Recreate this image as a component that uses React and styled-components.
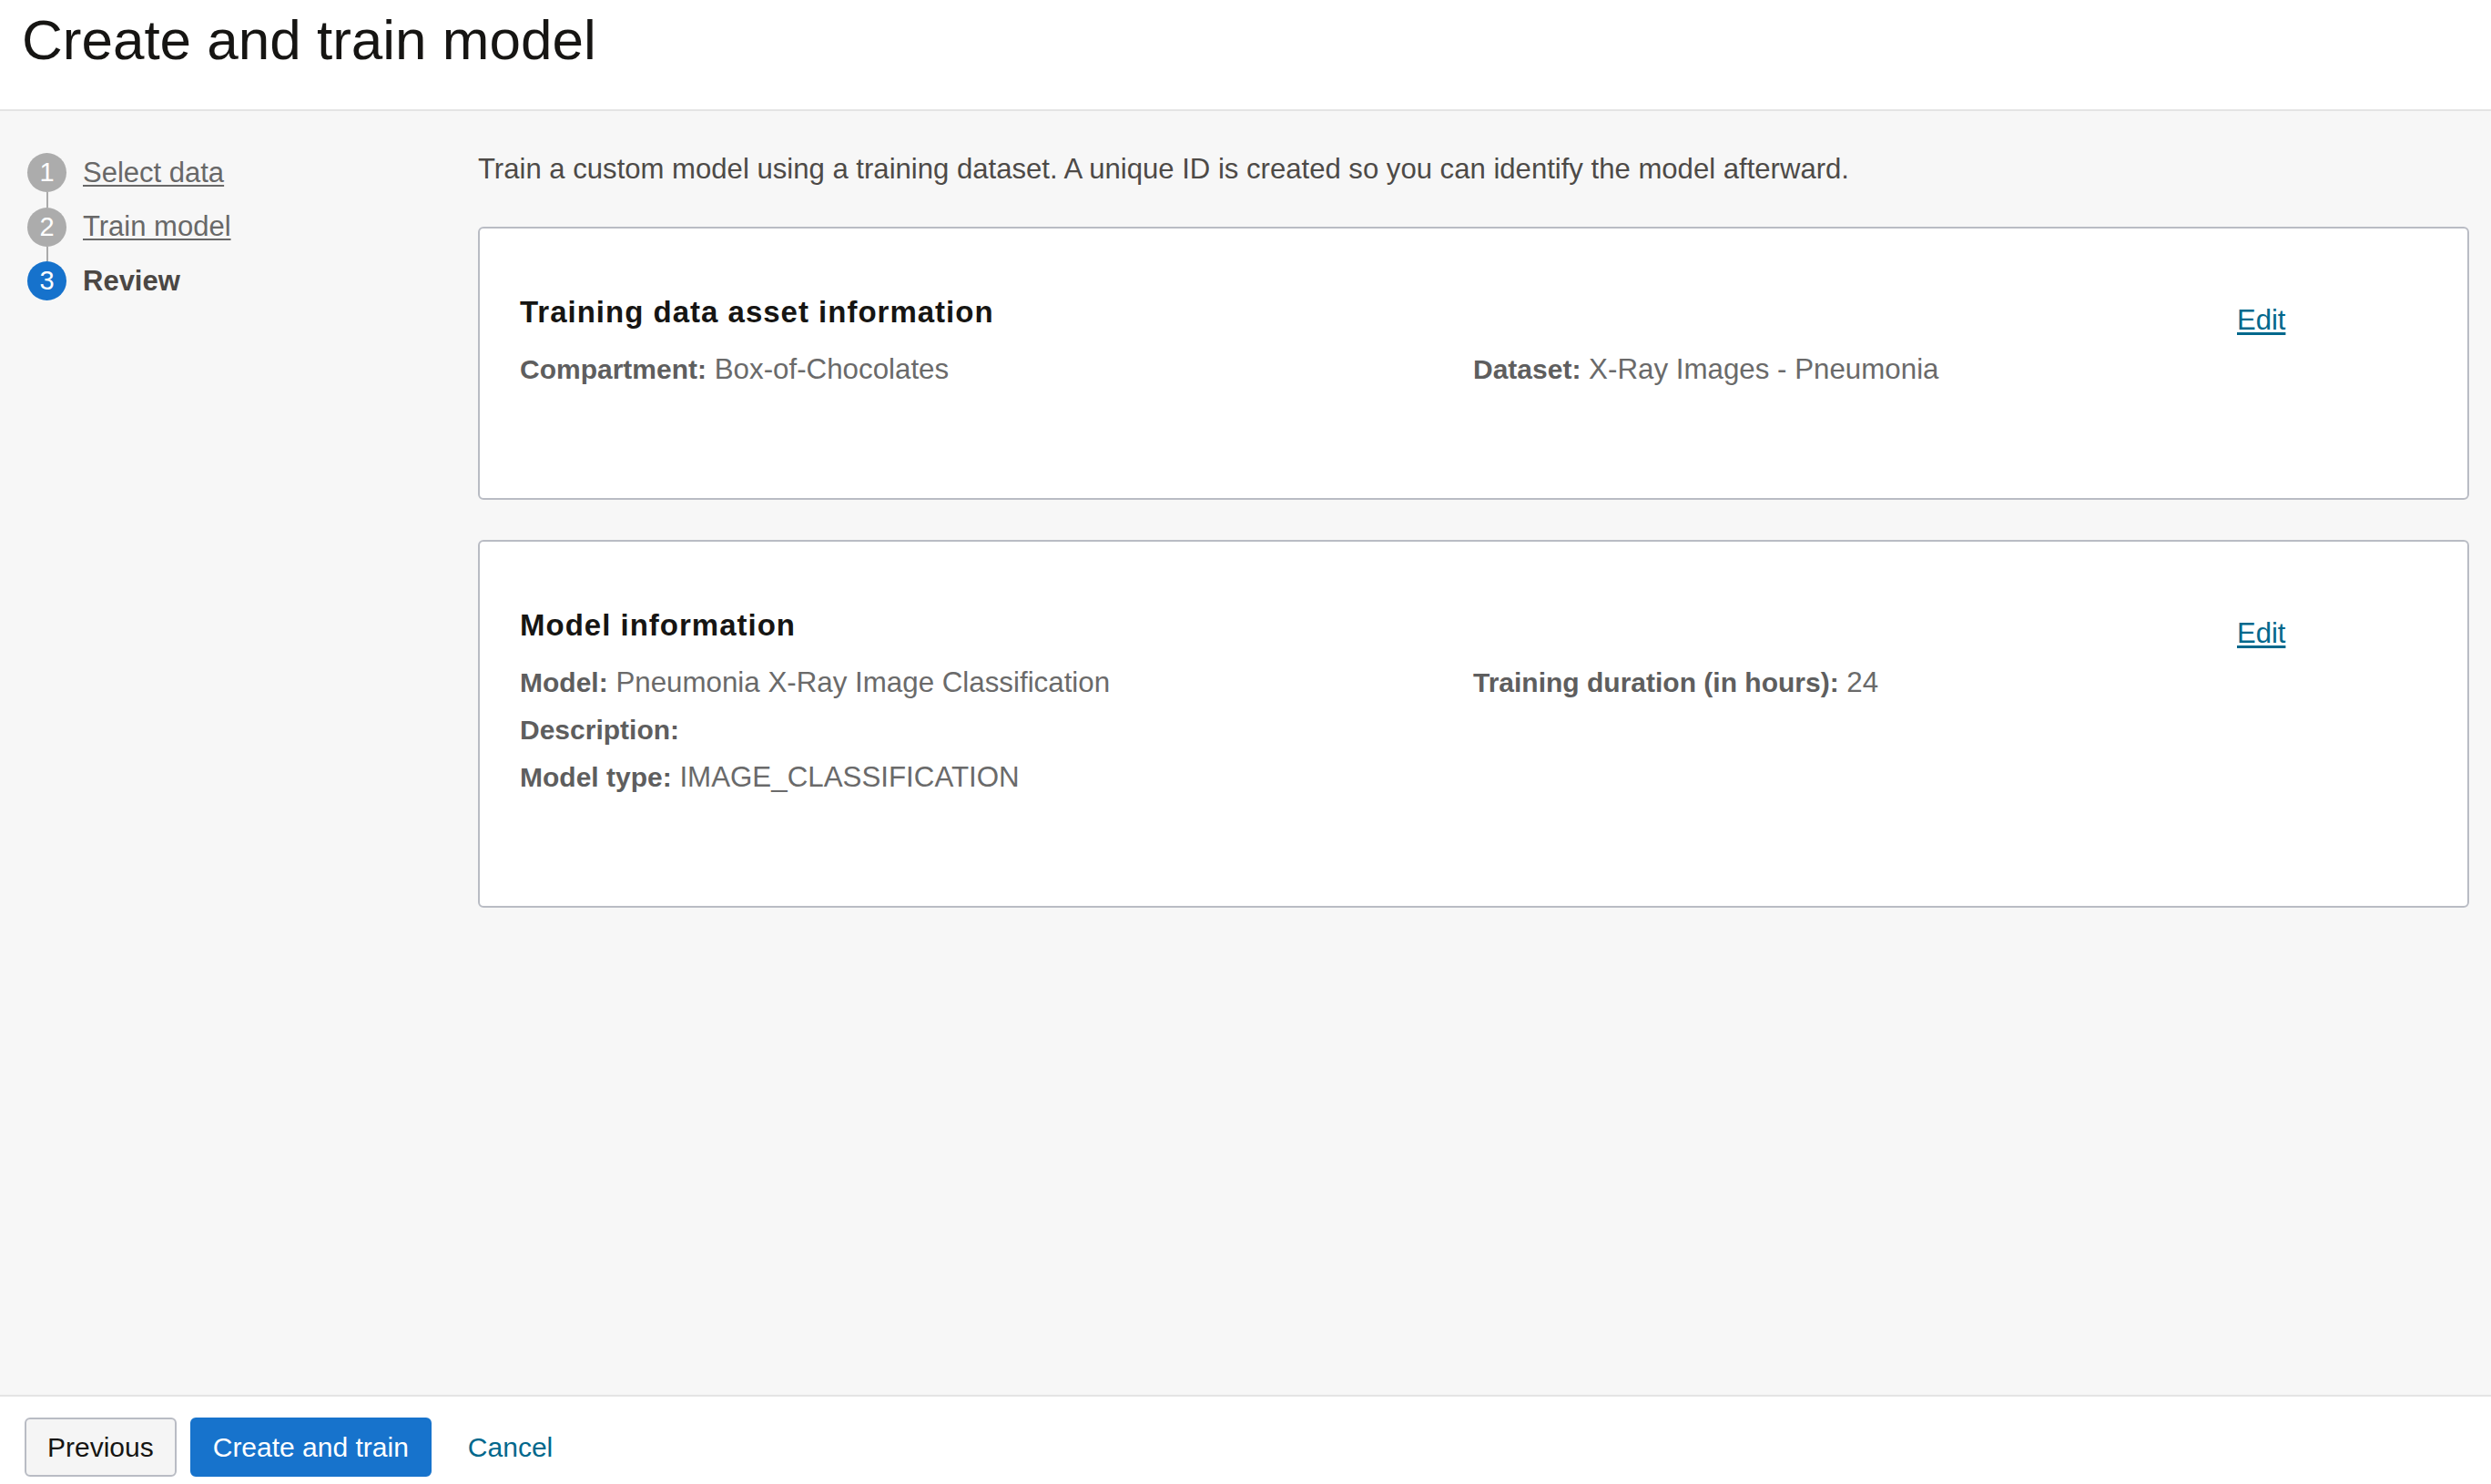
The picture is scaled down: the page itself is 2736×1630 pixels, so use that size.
import React from 'react'
import styled, { createGlobalStyle } from 'styled-components'

const GlobalStyle = createGlobalStyle`
  * { box-sizing: border-box; }
  html, body {
    margin: 0;
    padding: 0;
  }
  body {
    font-family: "Liberation Sans", Arial, Helvetica, sans-serif;
    background: #f7f7f7;
    color: #161513;
  }
`

const Page = styled.div`
  height: 100vh;
  display: flex;
  flex-direction: column;
`

const Header = styled.header`
  height: 122px;
  flex: none;
  background: #fff;
  border-bottom: 2px solid #e4e4e4;
  padding: 7px 24px 0;
`

const PageTitle = styled.h1`
  margin: 0;
  font-size: 62px;
  font-weight: 400;
  line-height: 74px;
  color: #161513;
`

const Body = styled.div`
  flex: 1;
  min-height: 0;
  display: grid;
  grid-template-columns: 525px 1fr;
  padding-right: 24px;
`

const Steps = styled.ol`
  list-style: none;
  margin: 0;
  padding: 46px 0 0 30px;
`

const Step = styled.li`
  display: flex;
  align-items: center;
  gap: 18px;
  height: 43px;
`

const StepNumber = styled.span`
  width: 43px;
  height: 43px;
  flex: none;
  border-radius: 50%;
  display: flex;
  align-items: center;
  justify-content: center;
  background: ${p => (p.$current ? '#1672cc' : '#acacac')};
  color: #fff;
  font-size: 29px;
  line-height: 1;
`

const StepLabel = styled.a`
  font-size: 31px;
  line-height: 40px;
  color: ${p => (p.$current ? '#4b4744' : '#686868')};
  font-weight: ${p => (p.$current ? 700 : 400)};
  text-decoration: ${p => (p.$current ? 'none' : 'underline')};
  text-decoration-thickness: 2px;
  text-underline-offset: 3px;
  cursor: pointer;
`

const Connector = styled.li`
  width: 2px;
  height: 16.5px;
  margin-left: 20.5px;
  background: #ababab;
`

const Main = styled.main`
  padding-top: 44px;
`

const Intro = styled.p`
  margin: 0 0 43px;
  font-size: 31.1px;
  line-height: 40px;
  color: #4d4a47;
`

const Card = styled.section`
  display: flex;
  background: #fff;
  border: 2px solid #b9bcc4;
  border-radius: 6px;
  padding: 71.5px 44px 115.5px 44px;

  & + & {
    margin-top: 44px;
  }
`

const Info = styled.div`
  flex: 1;
`

const CardTitle = styled.h2`
  margin: 0;
  font-size: 33px;
  font-weight: 700;
  line-height: 40px;
  letter-spacing: 1px;
  color: #161513;
`

const Fields = styled.div`
  display: grid;
  grid-template-columns: 1047px 1fr;
  margin-top: 17px;
`

const Field = styled.div`
  height: 52px;
  font-size: 31.3px;
  line-height: 52px;
  color: #6a6a6a;
  white-space: nowrap;

  b {
    font-size: 30px;
    line-height: 30px;
    color: #5e5e5e;
    font-weight: 700;
  }
`

const Actions = styled.div`
  width: 209px;
  flex: none;
  padding-top: 9px;
`

const EditLink = styled.a`
  font-size: 31px;
  line-height: 40px;
  color: #00688c;
  text-decoration: underline;
  text-decoration-thickness: 2.5px;
  text-underline-offset: 3px;
  cursor: pointer;
`

const Footer = styled.footer`
  flex: none;
  display: flex;
  gap: 15px;
  background: #fff;
  border-top: 2px solid #e4e4e4;
  padding: 23px 27px 8px;
`

const variants = {
  default: 'background: #f5f5f5; border-color: #b9bcc4; color: #161513;',
  primary: 'background: #1773cc; border-color: #1773cc; color: #fff;',
  ghost: 'background: transparent; border-color: transparent; color: #00688c;',
}

const Button = styled.button`
  height: 65px;
  padding: 0 23px;
  border: 2px solid;
  border-radius: 6px;
  font-family: inherit;
  font-size: 30px;
  cursor: pointer;
  ${p => variants[p.$variant || 'default']}
`

const steps = [
  { n: 1, label: 'Select data' },
  { n: 2, label: 'Train model' },
  { n: 3, label: 'Review', current: true },
]

function Stepper() {
  return (
    <Steps>
      {steps.map((s, i) => (
        <React.Fragment key={s.n}>
          {i > 0 && <Connector aria-hidden />}
          <Step>
            <StepNumber $current={s.current}>{s.n}</StepNumber>
            <StepLabel $current={s.current}>{s.label}</StepLabel>
          </Step>
        </React.Fragment>
      ))}
    </Steps>
  )
}

function ReviewCard({ title, left, right }) {
  return (
    <Card>
      <Info>
        <CardTitle>{title}</CardTitle>
        <Fields>
          <div>
            {left.map(([k, v]) => (
              <Field key={k}><b>{k}:</b> {v}</Field>
            ))}
          </div>
          <div>
            {right.map(([k, v]) => (
              <Field key={k}><b>{k}:</b> {v}</Field>
            ))}
          </div>
        </Fields>
      </Info>
      <Actions>
        <EditLink>Edit</EditLink>
      </Actions>
    </Card>
  )
}

export default function App() {
  return (
    <Page>
      <GlobalStyle />
      <Header>
        <PageTitle>Create and train model</PageTitle>
      </Header>
      <Body>
        <Stepper />
        <Main>
          <Intro>
            Train a custom model using a training dataset. A unique ID is created so you can identify the model afterward.
          </Intro>
          <ReviewCard
            title="Training data asset information"
            left={[['Compartment', 'Box-of-Chocolates']]}
            right={[['Dataset', 'X-Ray Images - Pneumonia']]}
          />
          <ReviewCard
            title="Model information"
            left={[
              ['Model', 'Pneumonia X-Ray Image Classification'],
              ['Description', ''],
              ['Model type', 'IMAGE_CLASSIFICATION'],
            ]}
            right={[['Training duration (in hours)', '24']]}
          />
        </Main>
      </Body>
      <Footer>
        <Button>Previous</Button>
        <Button $variant="primary">Create and train</Button>
        <Button $variant="ghost">Cancel</Button>
      </Footer>
    </Page>
  )
}
